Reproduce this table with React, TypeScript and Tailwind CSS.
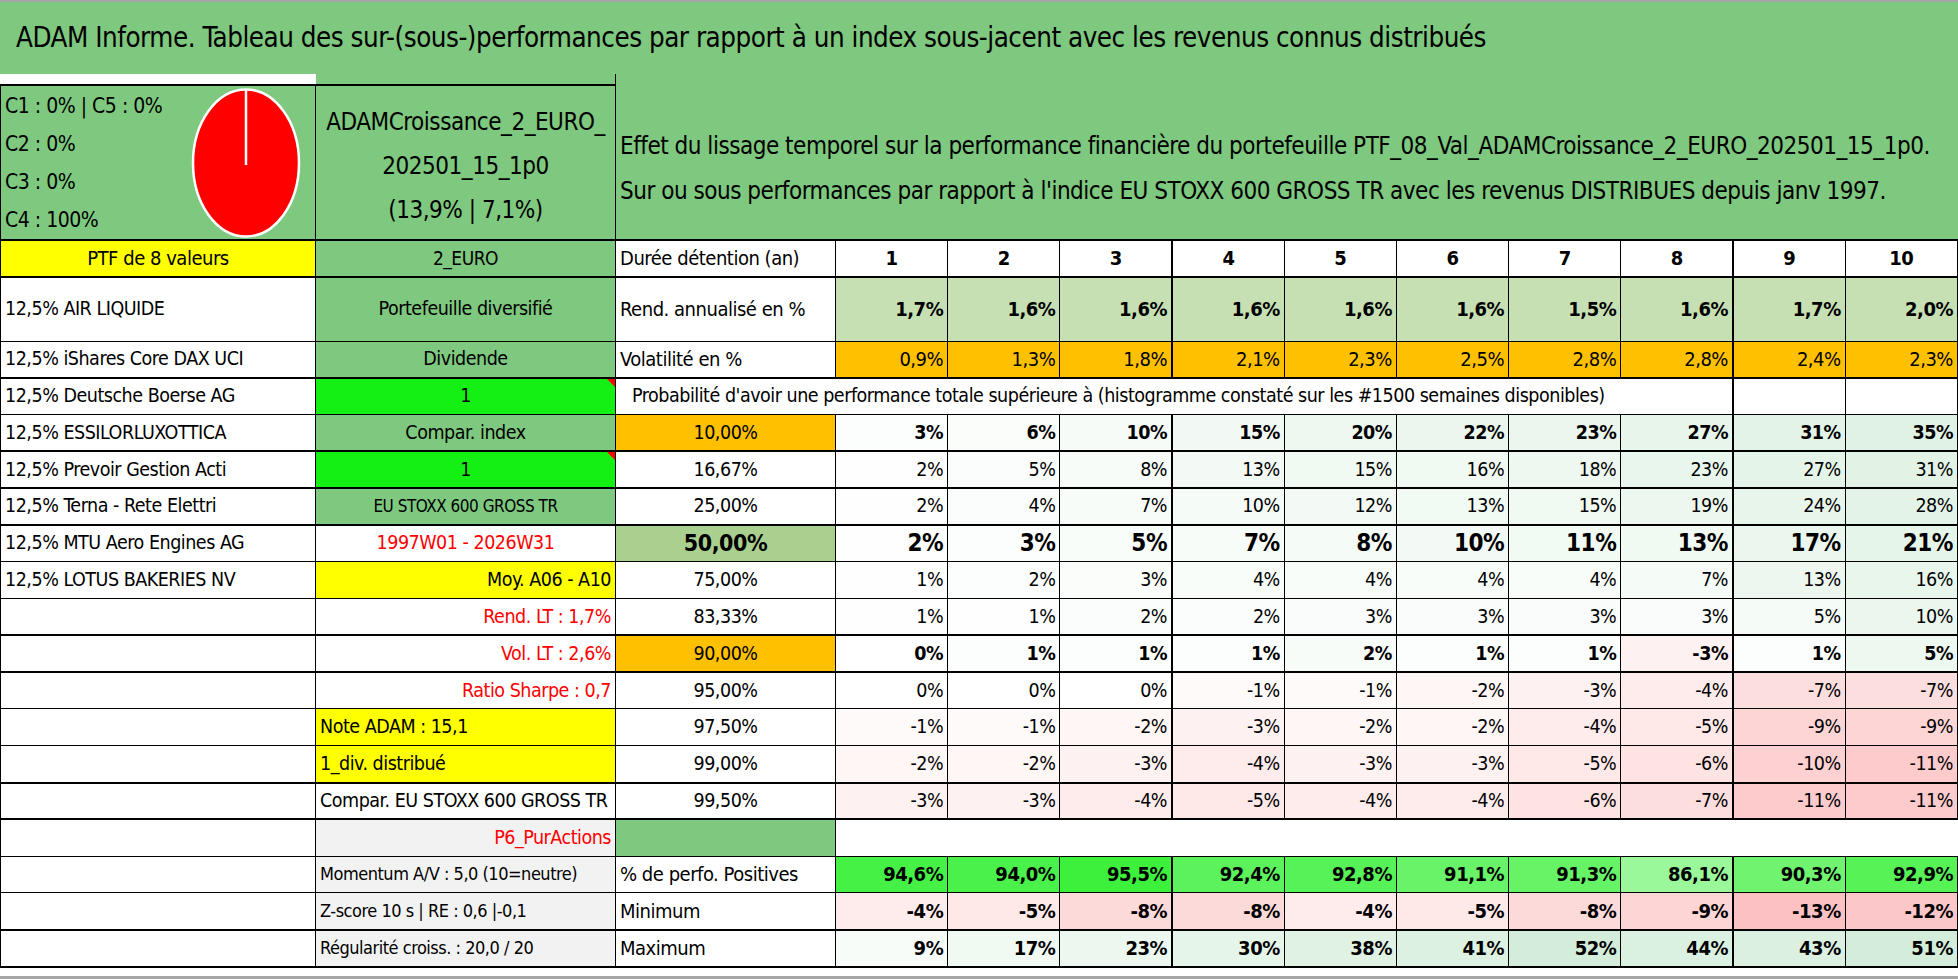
import React from "react";

const FONT = "font-['DejaVu_Sans_Condensed','Liberation_Sans_Narrow',sans-serif]";

type RGB = [number, number, number];
const GREEN: RGB = [99, 190, 123];
const RED: RGB = [248, 105, 107];
const BRIGHT: RGB = [60, 240, 60];

function mix(c: RGB, t: number) {
  const k = Math.max(0, Math.min(1, t));
  const [r, g, b] = c.map((x) => Math.round(255 - (255 - x) * k));
  return `rgb(${r}, ${g}, ${b})`;
}

// couleur façon "échelle de couleurs" Excel
function probBg(v: number, rowMax: number) {
  if (v < 0) return mix(RED, -v / 32);
  if (v === 0 || rowMax <= 0) return "#ffffff";
  return mix(GREEN, 0.1 * (v / rowMax) + 0.1 * (v / 35));
}

const pct = (v: number) => `${v}%`;
const dec = (v: number) => `${v.toFixed(1).replace(".", ",")}%`;

const edge = (i: number) => (i === 2 || i === 7 ? "border-r-2" : "");

function Values({
  values,
  fmt = pct,
  cls = "",
  bg,
}: {
  values: number[];
  fmt?: (v: number) => string;
  cls?: string;
  bg: (v: number, i: number) => string;
}) {
  return (
    <>
      {values.map((v, i) => (
        <td
          key={i}
          className={`border border-black text-right pr-1 ${edge(i)} ${cls}`}
          style={{ backgroundColor: bg(v, i) }}
        >
          {fmt(v)}
        </td>
      ))}
    </>
  );
}

function Prob({ values, cls = "" }: { values: number[]; cls?: string }) {
  const max = Math.max(...values);
  return <Values values={values} cls={cls} bg={(v) => probBg(v, max)} />;
}

function Flag() {
  return (
    <span className="absolute top-0 right-0 w-0 h-0 border-l-[8px] border-l-transparent border-t-[8px] border-t-[#FF0000]" />
  );
}

const A = "border border-black px-1 whitespace-nowrap overflow-hidden";
const B = "border border-black px-1 whitespace-nowrap overflow-hidden";
const C = "border border-black px-1 whitespace-nowrap overflow-hidden";

const positives = [94.6, 94.0, 95.5, 92.4, 92.8, 91.1, 91.3, 86.1, 90.3, 92.9];
const minimum = [-4, -5, -8, -8, -4, -5, -8, -9, -13, -12];
const maximum = [9, 17, 23, 30, 38, 41, 52, 44, 43, 51];

export default function App() {
  return (
    <div
      className={`${FONT} tracking-[-0.03em] w-[1958px] h-[979px] bg-white text-black border-t-2 border-b-[3px] border-[#a6a6a6] overflow-hidden`}
    >
      <div className="h-[72px] bg-[#7EC87F] flex items-center pl-4 text-[27.5px] whitespace-nowrap">
        ADAM Informe. Tableau des sur-(sous-)performances par rapport à un index sous-jacent avec les revenus connus distribués
      </div>

      <table className="table-fixed border-collapse w-[1957px] leading-[1.15] text-[19.5px]">
        <colgroup>
          <col className="w-[315px]" />
          <col className="w-[300px]" />
          <col className="w-[220px]" />
          {Array.from({ length: 10 }).map((_, i) => (
            <col key={i} className="w-[112.2px]" />
          ))}
        </colgroup>
        <tbody>
          <tr className="h-[11px]">
            <td className="bg-white p-0" />
            <td className="bg-[#7EC87F] p-0" />
            <td
              colSpan={11}
              rowSpan={2}
              className="bg-[#7EC87F] align-top pt-[50px] pl-1 text-[24px] leading-[45px] border-l border-black whitespace-nowrap overflow-hidden"
            >
              Effet du lissage temporel sur la performance financière du portefeuille PTF_08_Val_ADAMCroissance_2_EURO_202501_15_1p0.
              <br />
              Sur ou sous performances par rapport à l'indice EU STOXX 600 GROSS TR avec les revenus DISTRIBUES depuis janv 1997.
            </td>
          </tr>
          <tr className="h-[155px]">
            <td className="bg-[#7EC87F] border border-black border-t-2 p-0">
              <div className="flex items-center justify-between pl-1 pr-[14px]">
                <div className="text-[21px] leading-[38px] whitespace-nowrap">
                  <div>C1 : 0% | C5 : 0%</div>
                  <div>C2 : 0%</div>
                  <div>C3 : 0%</div>
                  <div>C4 : 100%</div>
                </div>
                <svg width="110" height="152" viewBox="0 0 110 152">
                  <ellipse cx="55" cy="76" rx="53" ry="73.5" fill="#FF0000" stroke="#ffffff" strokeWidth="2.5" />
                  <line x1="55" y1="3" x2="55" y2="78" stroke="#ffffff" strokeWidth="2.5" />
                </svg>
              </div>
            </td>
            <td className="bg-[#7EC87F] border border-black border-t-2 text-center text-[24px] leading-[44px] pt-[6px] whitespace-nowrap">
              ADAMCroissance_2_EURO_
              <br />
              202501_15_1p0
              <br />
              (13,9% | 7,1%)
            </td>
          </tr>

          <tr className="h-[37px] border-t-2 border-black">
            <td className={`${A} bg-[#FFFF00] text-center text-[20px]`}>PTF de 8 valeurs</td>
            <td className={`${B} bg-[#7EC87F] text-center text-[19px]`}>2_EURO</td>
            <td className={`${C} text-[20px]`}>Durée détention (an)</td>
            {Array.from({ length: 10 }).map((_, i) => (
              <td key={i} className={`border border-black text-center font-bold text-[20px] ${edge(i)}`}>
                {i + 1}
              </td>
            ))}
          </tr>

          <tr className="h-[64px] border-t-2 border-black">
            <td className={A}>12,5% AIR LIQUIDE</td>
            <td className={`${B} bg-[#7EC87F] text-center`}>Portefeuille diversifié</td>
            <td className={`${C} text-[20px]`}>Rend. annualisé en %</td>
            <Values
              values={[1.7, 1.6, 1.6, 1.6, 1.6, 1.6, 1.5, 1.6, 1.7, 2.0]}
              fmt={dec}
              cls="font-bold text-[20px]"
              bg={() => "#C6E0B4"}
            />
          </tr>

          <tr className="h-[36.8px]">
            <td className={A}>12,5% iShares Core DAX UCI</td>
            <td className={`${B} bg-[#7EC87F] text-center`}>Dividende</td>
            <td className={`${C} text-[20px]`}>Volatilité en %</td>
            <Values
              values={[0.9, 1.3, 1.8, 2.1, 2.3, 2.5, 2.8, 2.8, 2.4, 2.3]}
              fmt={dec}
              cls="text-[20px]"
              bg={() => "#FFC000"}
            />
          </tr>

          <tr className="h-[36.8px] border-t-2 border-black">
            <td className={A}>12,5% Deutsche Boerse AG</td>
            <td className={`${B} bg-[#14F014] text-center relative`}>
              1
              <Flag />
            </td>
            <td colSpan={9} className="border border-black pl-4 whitespace-nowrap overflow-hidden">
              Probabilité d'avoir une performance totale supérieure à (histogramme constaté sur les #1500 semaines disponibles)
            </td>
            <td className="border border-black border-l-2" />
            <td className="border border-black" />
          </tr>

          <tr className="h-[36.8px]">
            <td className={A}>12,5% ESSILORLUXOTTICA</td>
            <td className={`${B} bg-[#7EC87F] text-center`}>Compar. index</td>
            <td className={`${C} bg-[#FFC000] text-center`}>10,00%</td>
            <Prob values={[3, 6, 10, 15, 20, 22, 23, 27, 31, 35]} cls="font-bold" />
          </tr>

          <tr className="h-[36.8px] border-t-2 border-black">
            <td className={A}>12,5% Prevoir Gestion Acti</td>
            <td className={`${B} bg-[#14F014] text-center relative`}>
              1
              <Flag />
            </td>
            <td className={`${C} text-center`}>16,67%</td>
            <Prob values={[2, 5, 8, 13, 15, 16, 18, 23, 27, 31]} />
          </tr>

          <tr className="h-[36.8px] border-t-2 border-black">
            <td className={A}>12,5% Terna - Rete Elettri</td>
            <td className={`${B} bg-[#7EC87F] text-center text-[17px]`}>EU STOXX 600 GROSS TR</td>
            <td className={`${C} text-center`}>25,00%</td>
            <Prob values={[2, 4, 7, 10, 12, 13, 15, 19, 24, 28]} />
          </tr>

          <tr className="h-[36.8px] border-t-2 border-black">
            <td className={A}>12,5% MTU Aero Engines AG</td>
            <td className={`${B} text-center text-[#FF0000]`}>1997W01 - 2026W31</td>
            <td className={`${C} bg-[#A9D08E] text-center text-[23px] font-semibold`}>50,00%</td>
            <Prob values={[2, 3, 5, 7, 8, 10, 11, 13, 17, 21]} cls="font-bold text-[24px]" />
          </tr>

          <tr className="h-[36.8px]">
            <td className={A}>12,5% LOTUS BAKERIES NV</td>
            <td className={`${B} bg-[#FFFF00] text-right`}>Moy. A06 - A10</td>
            <td className={`${C} text-center`}>75,00%</td>
            <Prob values={[1, 2, 3, 4, 4, 4, 4, 7, 13, 16]} />
          </tr>

          <tr className="h-[36.8px]">
            <td className={A} />
            <td className={`${B} text-right text-[#FF0000]`}>Rend. LT : 1,7%</td>
            <td className={`${C} text-center`}>83,33%</td>
            <Prob values={[1, 1, 2, 2, 3, 3, 3, 3, 5, 10]} />
          </tr>

          <tr className="h-[36.8px] border-t-2 border-black">
            <td className={A} />
            <td className={`${B} text-right text-[#FF0000]`}>Vol. LT : 2,6%</td>
            <td className={`${C} bg-[#FFC000] text-center`}>90,00%</td>
            <Prob values={[0, 1, 1, 1, 2, 1, 1, -3, 1, 5]} cls="font-bold" />
          </tr>

          <tr className="h-[36.8px] border-t-2 border-black">
            <td className={A} />
            <td className={`${B} text-right text-[#FF0000]`}>Ratio Sharpe : 0,7</td>
            <td className={`${C} text-center`}>95,00%</td>
            <Prob values={[0, 0, 0, -1, -1, -2, -3, -4, -7, -7]} />
          </tr>

          <tr className="h-[36.8px]">
            <td className={A} />
            <td className={`${B} bg-[#FFFF00]`}>Note ADAM : 15,1</td>
            <td className={`${C} text-center`}>97,50%</td>
            <Prob values={[-1, -1, -2, -3, -2, -2, -4, -5, -9, -9]} />
          </tr>

          <tr className="h-[36.8px]">
            <td className={A} />
            <td className={`${B} bg-[#FFFF00]`}>1_div. distribué</td>
            <td className={`${C} text-center`}>99,00%</td>
            <Prob values={[-2, -2, -3, -4, -3, -3, -5, -6, -10, -11]} />
          </tr>

          <tr className="h-[36.8px] border-t-2 border-black">
            <td className={A} />
            <td className={B}>Compar. EU STOXX 600 GROSS TR</td>
            <td className={`${C} text-center`}>99,50%</td>
            <Prob values={[-3, -3, -4, -5, -4, -4, -6, -7, -11, -11]} />
          </tr>

          <tr className="h-[36.8px] border-t-2 border-black">
            <td className={A} />
            <td className={`${B} bg-[#F2F2F2] text-right text-[#FF0000]`}>P6_PurActions</td>
            <td className={`${C} bg-[#7EC87F]`} />
            <td colSpan={10} className="bg-white" />
          </tr>

          <tr className="h-[36.8px]">
            <td className={A} />
            <td className={`${B} bg-[#F2F2F2] text-[18px]`}>Momentum A/V : 5,0 (10=neutre)</td>
            <td className={`${C} text-[20px]`}>% de perfo. Positives</td>
            <Values
              values={positives}
              fmt={dec}
              cls="font-bold text-[20px]"
              bg={(v) => mix(BRIGHT, (v - 76) / 19.5)}
            />
          </tr>

          <tr className="h-[36.8px]">
            <td className={A} />
            <td className={`${B} bg-[#F2F2F2] text-[18px]`}>Z-score 10 s | RE : 0,6 |-0,1</td>
            <td className={`${C} text-[20px]`}>Minimum</td>
            <Values values={minimum} cls="font-bold text-[20px]" bg={(v) => mix(RED, -v / 32)} />
          </tr>

          <tr className="h-[36.8px] border-t-2 border-b-2 border-black">
            <td className={A} />
            <td className={`${B} bg-[#F2F2F2] text-[18px]`}>Régularité croiss. : 20,0 / 20</td>
            <td className={`${C} text-[20px]`}>Maximum</td>
            <Values
              values={maximum}
              cls="font-bold text-[20px]"
              bg={(v) => mix(GREEN, (0.28 * v) / 52)}
            />
          </tr>
        </tbody>
      </table>
    </div>
  );
}
